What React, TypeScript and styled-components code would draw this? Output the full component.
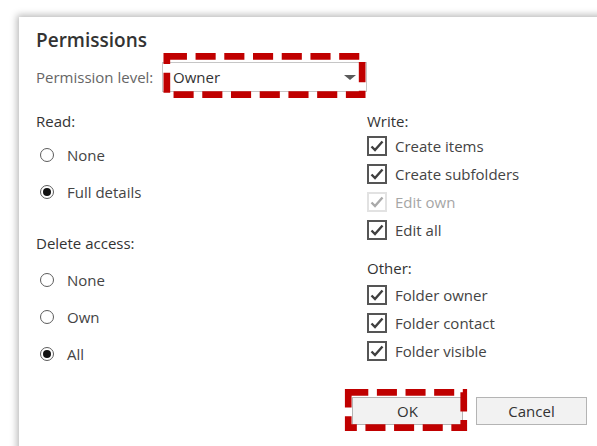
import React from 'react';
import styled, { createGlobalStyle } from 'styled-components';

// #region styles

const GlobalStyle = createGlobalStyle`
  html, body {
    margin: 0;
    padding: 0;
    background: #ffffff;
    overflow: hidden;
  }
  body {
    font-family: 'Open Sans', 'Noto Sans', 'Liberation Sans', sans-serif;
    font-size: 15px;
    color: #333333;
  }
`;

const Page = styled.div`
  width: 597px;
  height: 446px;
  overflow: hidden;
  position: relative;
`;

const Dialog = styled.div`
  margin: 17px 0 0 19px;
  width: 600px;
  height: 460px;
  box-sizing: border-box;
  padding: 11px 32px 0 17px;
  background: #ffffff;
  box-shadow: 0 0 7px 2px rgba(0, 0, 0, 0.28);
  display: flex;
  flex-direction: column;
`;

const Title = styled.h2`
  margin: 0;
  font-size: 19px;
  font-weight: 600;
  line-height: 24px;
  color: #333333;
`;

const LevelRow = styled.div`
  display: flex;
  align-items: center;
  margin-top: 10px;
  height: 30px;
`;

const LevelLabel = styled.span`
  color: #666666;
  width: 126px;
  white-space: nowrap;
`;

const Select = styled.div`
  position: relative;
  width: 205px;
  height: 30px;
  box-sizing: border-box;
  border: 1px solid #c6c6c6;
  display: flex;
  align-items: center;
  padding: 0 10px;
  color: #333333;
`;

const SelectArrow = styled.span`
  margin-left: auto;
  width: 0;
  height: 0;
  border-left: 6px solid transparent;
  border-right: 6px solid transparent;
  border-top: 5px solid #5a5a5a;
`;

const Columns = styled.div`
  display: grid;
  grid-template-columns: 331px 1fr;
  margin-top: 19px;
`;

const Column = styled.div`
  display: flex;
  flex-direction: column;
`;

const GroupLabel = styled.div<{ $gap?: number }>`
  line-height: 20px;
  height: 20px;
  margin-top: ${(p) => p.$gap ?? 0}px;
  color: #333333;
`;

const RadioList = styled.div<{ $gap: number }>`
  display: flex;
  flex-direction: column;
  margin-top: ${(p) => p.$gap}px;
`;

const RadioRow = styled.label`
  display: flex;
  align-items: center;
  height: 37px;
  padding-left: 4px;
  color: #444444;
`;

const RadioCircle = styled.span<{ $checked: boolean }>`
  width: 14px;
  height: 14px;
  box-sizing: border-box;
  border: 1px solid #5c5c5c;
  border-radius: 50%;
  margin-right: 13px;
  display: flex;
  align-items: center;
  justify-content: center;
  &::after {
    content: '';
    display: ${(p) => (p.$checked ? 'block' : 'none')};
    width: 8px;
    height: 8px;
    border-radius: 50%;
    background: #111111;
  }
`;

const CheckList = styled.div<{ $gap: number }>`
  display: flex;
  flex-direction: column;
  margin-top: ${(p) => p.$gap}px;
`;

const CheckRow = styled.label<{ $disabled?: boolean }>`
  display: flex;
  align-items: center;
  height: 28px;
  color: ${(p) => (p.$disabled ? '#a6a6a6' : '#444444')};
`;

const CheckBox = styled.span<{ $disabled?: boolean }>`
  width: 20px;
  height: 20px;
  box-sizing: border-box;
  border: 2px solid ${(p) => (p.$disabled ? '#e2e2e2' : '#555555')};
  margin-right: 8px;
  display: flex;
  align-items: center;
  justify-content: center;
  svg {
    display: block;
  }
`;

const ButtonRow = styled.div`
  display: flex;
  justify-content: flex-end;
  gap: 13px;
  margin-top: 25px;
`;

const DialogButton = styled.button`
  position: relative;
  width: 111px;
  height: 28px;
  box-sizing: border-box;
  border: 1px solid #b4b4b4;
  background: #f2f2f2;
  font-family: inherit;
  font-size: 15px;
  color: #333333;
  padding: 0;
`;

// 赤い点線の強調枠（要素の上に重ねて描く）
const Highlight = styled.svg<{ $top: number; $right: number; $bottom: number; $left: number }>`
  position: absolute;
  top: ${(p) => -p.$top}px;
  left: ${(p) => -p.$left}px;
  width: calc(100% + ${(p) => p.$left + p.$right}px);
  height: calc(100% + ${(p) => p.$top + p.$bottom}px);
  overflow: visible;
  pointer-events: none;
`;

// #endregion styles

const DashedFrame = (props: { top: number; right: number; bottom: number; left: number; w: number; h: number }) => {
  const { top, right, bottom, left, w, h } = props;
  const W = w + left + right;
  const H = h + top + bottom;
  return (
    <Highlight $top={top} $right={right} $bottom={bottom} $left={left} viewBox={`0 0 ${W} ${H}`}>
      <rect x={3.5} y={3.5} width={W - 7} height={H - 7} fill="none" stroke="#c00000" strokeWidth={7} strokeDasharray="21 9" />
    </Highlight>
  );
};

const Check = (props: { disabled?: boolean }) => (
  <svg width="14" height="12" viewBox="0 0 14 12">
    <path d="M1.5 6.5 L5 10 L12.5 1.5" fill="none" stroke={props.disabled ? '#a9a9a9' : '#3f3f3f'} strokeWidth="2.4" />
  </svg>
);

const Radio = (props: { label: string; checked?: boolean }) => (
  <RadioRow>
    <RadioCircle $checked={!!props.checked} />
    {props.label}
  </RadioRow>
);

const CheckItem = (props: { label: string; disabled?: boolean }) => (
  <CheckRow $disabled={props.disabled}>
    <CheckBox $disabled={props.disabled}>
      <Check disabled={props.disabled} />
    </CheckBox>
    {props.label}
  </CheckRow>
);

export default function App() {
  return (
    <Page>
      <GlobalStyle />
      <Dialog>
        <Title>Permissions</Title>
        <LevelRow>
          <LevelLabel>Permission level:</LevelLabel>
          <Select>
            Owner
            <SelectArrow />
            <DashedFrame top={10} right={3} bottom={7} left={3} w={205} h={30} />
          </Select>
        </LevelRow>
        <Columns>
          <Column>
            <GroupLabel>Read:</GroupLabel>
            <RadioList $gap={5}>
              <Radio label="None" />
              <Radio label="Full details" checked />
            </RadioList>
            <GroupLabel $gap={23}>Delete access:</GroupLabel>
            <RadioList $gap={8}>
              <Radio label="None" />
              <Radio label="Own" />
              <Radio label="All" checked />
            </RadioList>
          </Column>
          <Column>
            <GroupLabel>Write:</GroupLabel>
            <CheckList $gap={1}>
              <CheckItem label="Create items" />
              <CheckItem label="Create subfolders" />
              <CheckItem label="Edit own" disabled />
              <CheckItem label="Edit all" />
            </CheckList>
            <GroupLabel $gap={14}>Other:</GroupLabel>
            <CheckList $gap={3}>
              <CheckItem label="Folder owner" />
              <CheckItem label="Folder contact" />
              <CheckItem label="Folder visible" />
            </CheckList>
          </Column>
        </Columns>
        <ButtonRow>
          <DialogButton>
            OK
            <DashedFrame top={9} right={7} bottom={7} left={10} w={111} h={28} />
          </DialogButton>
          <DialogButton>Cancel</DialogButton>
        </ButtonRow>
      </Dialog>
    </Page>
  );
}
